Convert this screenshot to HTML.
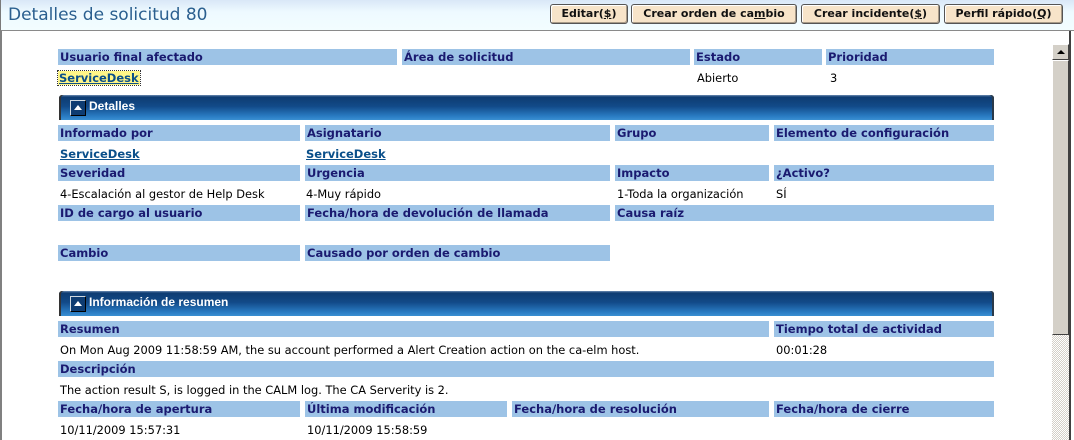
<!DOCTYPE html>
<html><head><meta charset="utf-8"><style>
*{margin:0;padding:0;box-sizing:border-box}
body{width:1074px;height:440px;overflow:hidden;background:#fff;position:relative;font-family:"DejaVu Sans","Liberation Sans",sans-serif}
#hdr{position:absolute;left:0;top:0;width:1074px;height:31px;background:linear-gradient(#d9e7f7,#eefaff 40%,#f2fdff);border-bottom:1px solid #8a8a8a;border-left:1px solid #7a7a7a}
#title{position:absolute;left:7px;top:5px;font-size:17px;color:#2a5f8f;font-family:"DejaVu Sans",sans-serif}
.btn{position:absolute;top:4px;height:20px;background:#f7e4c9;border:1px solid #555;border-radius:3px;box-shadow:inset -1px -1px 0 #a89b88,inset 1px 1px 0 #fff;font-size:11px;font-weight:bold;color:#111;text-align:center;line-height:18px}
#lb{position:absolute;left:0;top:31px;width:2px;height:409px;background:#808080}
.l{position:absolute;height:16px;background:#9dc3e6;color:#1a1a70;font-weight:bold;font-size:11.5px;line-height:16px;padding-left:2px;white-space:nowrap;overflow:hidden}
.v{position:absolute;font-size:11.4px;color:#000;white-space:nowrap;margin-top:1px}
.a{position:absolute;font-size:11.5px;font-weight:bold;color:#0a4f8a;text-decoration:underline;margin-top:1px}
.sec{position:absolute;left:59px;width:935px;height:25px;border-radius:3px 3px 0 0;background:linear-gradient(#6d8db3 0,#0e3c72 8%,#124a88 45%,#2a7cc3 85%,#3a8fd2);box-shadow:2px 0 0 #333 inset,-2px 0 0 #2a3a4a inset}
.sec .ic{position:absolute;left:11px;top:5px;width:16px;height:16px;border:1px solid #cfd8e0;border-right-color:#000;border-bottom-color:#000;background:#0e3c72}
.sec .ic:after{content:"";position:absolute;left:3px;top:4px;border-left:4px solid transparent;border-right:4px solid transparent;border-bottom:5px solid #fff}
.sec span{position:absolute;left:30px;top:4px;color:#fff;font-weight:bold;font-size:12px;font-family:"Liberation Sans",sans-serif}
#sb{position:absolute;left:1052px;top:44px;width:17px;height:396px;background:repeating-conic-gradient(#d4d0c8 0 25%,#fff 0 50%) 0 0/2px 2px}
#up{position:absolute;left:1052px;top:44px;width:17px;height:16px;background:#d4d0c8;border:1px solid;border-color:#fff #404040 #404040 #fff}
#up:after{content:"";position:absolute;left:4px;top:5px;border-left:4px solid transparent;border-right:4px solid transparent;border-bottom:4px solid #000}
#th{position:absolute;left:1052px;top:60px;width:17px;height:275px;background:#d4d0c8;border:1px solid;border-color:#fff #404040 #404040 #fff}
#rb{position:absolute;left:1069px;top:31px;width:2px;height:409px;background:#404040}
</style></head><body>
<div id="hdr"><div id="title">Detalles de solicitud 80</div>
<div class="btn" style="left:549px;width:78px">Editar(<u>$</u>)</div>
<div class="btn" style="left:630px;width:166px">Crear orden de ca<u>m</u>bio</div>
<div class="btn" style="left:800px;width:139px">Crear incidente(<u>$</u>)</div>
<div class="btn" style="left:943px;width:119px">Perfil rápido(<u>Q</u>)</div>
</div>
<div id="lb"></div>

<div class="l" style="left:58px;top:49px;width:339px">Usuario final afectado</div>
<div class="l" style="left:402px;top:49px;width:288px">Área de solicitud</div>
<div class="l" style="left:694px;top:49px;width:128px">Estado</div>
<div class="l" style="left:826px;top:49px;width:168px">Prioridad</div>
<div class="a" style="left:58px;top:70px;background:#fff688;outline:1px dotted #333;padding:0 1px">ServiceDesk</div>
<div class="v" style="left:697px;top:70px">Abierto</div>
<div class="v" style="left:830px;top:70px">3</div>

<div class="sec" style="top:95px"><div class="ic"></div><span>Detalles</span></div>

<div class="l" style="left:58px;top:125px;width:242px">Informado por</div>
<div class="l" style="left:305px;top:125px;width:305px">Asignatario</div>
<div class="l" style="left:615px;top:125px;width:154px">Grupo</div>
<div class="l" style="left:774px;top:125px;width:220px">Elemento de configuración</div>
<div class="a" style="left:60px;top:146px">ServiceDesk</div>
<div class="a" style="left:306px;top:146px">ServiceDesk</div>

<div class="l" style="left:58px;top:165px;width:242px">Severidad</div>
<div class="l" style="left:305px;top:165px;width:305px">Urgencia</div>
<div class="l" style="left:615px;top:165px;width:154px">Impacto</div>
<div class="l" style="left:774px;top:165px;width:220px">¿Activo?</div>
<div class="v" style="left:60px;top:186px">4-Escalación al gestor de Help Desk</div>
<div class="v" style="left:306px;top:186px">4-Muy rápido</div>
<div class="v" style="left:617px;top:186px">1-Toda la organización</div>
<div class="v" style="left:776px;top:186px">SÍ</div>

<div class="l" style="left:58px;top:205px;width:242px">ID de cargo al usuario</div>
<div class="l" style="left:305px;top:205px;width:305px">Fecha/hora de devolución de llamada</div>
<div class="l" style="left:615px;top:205px;width:379px">Causa raíz</div>

<div class="l" style="left:58px;top:245px;width:242px">Cambio</div>
<div class="l" style="left:305px;top:245px;width:305px">Causado por orden de cambio</div>

<div class="sec" style="top:291px"><div class="ic"></div><span>Información de resumen</span></div>

<div class="l" style="left:58px;top:321px;width:711px">Resumen</div>
<div class="l" style="left:774px;top:321px;width:220px">Tiempo total de actividad</div>
<div class="v" style="left:60px;top:342px">On Mon Aug 2009 11:58:59 AM, the su account performed a Alert Creation action on the ca-elm host.</div>
<div class="v" style="left:776px;top:342px">00:01:28</div>
<div class="l" style="left:58px;top:361px;width:936px">Descripción</div>
<div class="v" style="left:60px;top:382px">The action result S, is logged in the CALM log. The CA Serverity is 2.</div>
<div class="l" style="left:58px;top:401px;width:242px">Fecha/hora de apertura</div>
<div class="l" style="left:305px;top:401px;width:202px">Última modificación</div>
<div class="l" style="left:512px;top:401px;width:257px">Fecha/hora de resolución</div>
<div class="l" style="left:774px;top:401px;width:220px">Fecha/hora de cierre</div>
<div class="v" style="left:60px;top:422px">10/11/2009 15:57:31</div>
<div class="v" style="left:307px;top:422px">10/11/2009 15:58:59</div>

<div id="sb"></div><div id="up"></div><div id="th"></div><div id="rb"></div>
</body></html>
